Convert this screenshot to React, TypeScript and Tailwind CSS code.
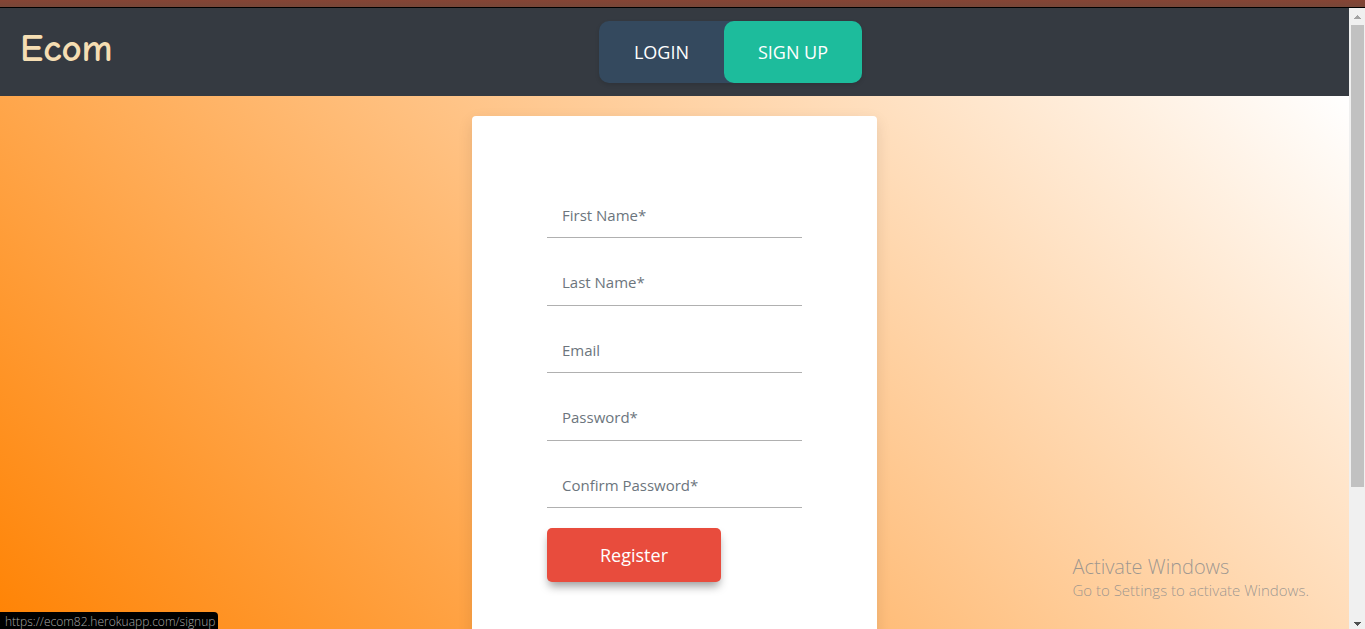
const fields = [
  { id: "firstName", label: "First Name*", type: "text" },
  { id: "lastName", label: "Last Name*", type: "text" },
  { id: "email", label: "Email", type: "email" },
  { id: "password", label: "Password*", type: "password" },
  { id: "confirmPassword", label: "Confirm Password*", type: "password" },
];

function NavBar() {
  return (
    <header className="grid h-[88px] shrink-0 grid-cols-[599fr_750fr] bg-[#353a41]">
      <a
        href="/"
        className="justify-self-start pt-2 pl-5 font-['Comic_Sans_MS','Comic_Neue','Open_Sans',sans-serif] text-[39px] leading-[66px] font-bold text-[#f5deb3]"
      >
        Ecom
      </a>
      <nav className="mt-[13px] flex h-[62px] self-start justify-self-start rounded-[10px] bg-[#34495e] text-lg text-white shadow-[0_2px_4px_rgba(0,0,0,0.12)]">
        <a href="/login" className="flex w-[125px] items-center justify-center">
          LOGIN
        </a>
        <a
          href="/signup"
          className="flex w-[138px] items-center justify-center rounded-[10px] bg-[#1dbc9c]"
        >
          SIGN UP
        </a>
      </nav>
    </header>
  );
}

function SignupForm() {
  return (
    <form
      className="h-[665px] w-[405px] shrink-0 rounded-[4px] bg-white px-[75px] pt-[76px] shadow-[0_5px_15px_rgba(0,0,0,0.1)]"
      onSubmit={(e) => e.preventDefault()}
    >
      <div className="flex h-[316px] flex-col justify-between">
        {fields.map((f) => (
          <input
            key={f.id}
            id={f.id}
            type={f.type}
            aria-label={f.label}
            placeholder={f.label}
            className="block h-[46px] w-full border-b border-[#b0b0b0] bg-white px-[15px] text-[15px] text-[#495057] outline-none placeholder:text-[#6c757d]"
          />
        ))}
      </div>
      <button
        type="submit"
        className="mt-5 h-[54px] w-[174px] rounded-[5px] bg-[#e84c3d] text-lg text-white shadow-[0_6px_10px_-2px_rgba(0,0,0,0.4)]"
      >
        Register
      </button>
    </form>
  );
}

function Scrollbar() {
  return (
    <div aria-hidden="true" className="flex w-4 shrink-0 flex-col items-center bg-[#f0f0f0]">
      <svg width="16" height="17" viewBox="0 0 16 17" shapeRendering="crispEdges">
        <path d="M5 11V10H6V9H7V8H8V7H9V8H10V9H11V10H12V11Z" fill="#a3a3a3" />
      </svg>
      <div className="ml-px h-[462px] w-[13px] bg-[#c1c1c1]" />
      <svg className="mt-auto" width="16" height="17" viewBox="0 0 16 17" shapeRendering="crispEdges">
        <path d="M5 10V11H6V12H7V13H8V14H9V13H10V12H11V11H12V10Z" fill="#505050" />
      </svg>
    </div>
  );
}

export default function App() {
  return (
    <div className="relative flex h-screen flex-col overflow-hidden font-['Open_Sans',sans-serif]">
      <div className="h-2 shrink-0 border-b border-black bg-linear-to-b from-[#854434] to-[#774638]" />
      <div className="flex min-h-0 flex-1">
        <div className="flex min-w-0 flex-1 flex-col">
          <NavBar />
          <main className="flex min-h-0 flex-1 items-start justify-center bg-[linear-gradient(45deg,#ff8304,#ffffff)] pt-5">
            <SignupForm />
          </main>
        </div>
        <Scrollbar />
      </div>
      <div className="absolute right-14 bottom-7 text-[#8c8c8c]/85">
        <p className="text-xl leading-6 font-light">Activate Windows</p>
        <p className="text-[15px] leading-[22px] font-light">Go to Settings to activate Windows.</p>
      </div>
      <div className="absolute bottom-0 left-0 h-[17px] rounded-tr-[4px] bg-black pr-[3px] pl-[5px] text-xs leading-5 font-light text-[#a8a8a8]">
        https://ecom82.herokuapp.com/signup
      </div>
    </div>
  );
}
